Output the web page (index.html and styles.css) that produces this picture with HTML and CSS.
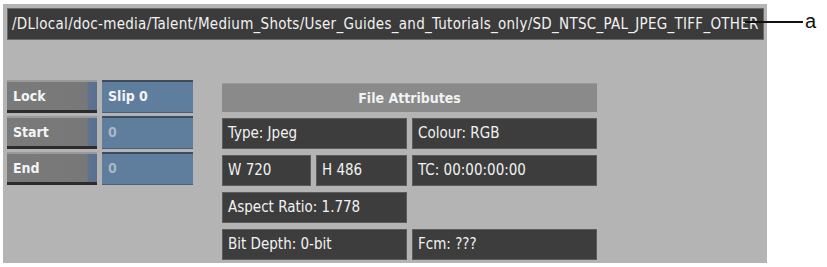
FILE: index.html
```html
<!DOCTYPE html>
<html lang="en">
<head>
  <meta charset="UTF-8">
  <title>File Attributes</title>
  <link rel="stylesheet" href="styles.css">
</head>
<body>

  <div class="panel">
    <!-- clip path -->
    <div class="path">/DLlocal/doc-media/Talent/Medium_Shots/User_Guides_and_Tutorials_only/SD_NTSC_PAL_JPEG_TIFF_OTHER</div>

    <div class="main">
      <div class="controls">
        <div class="row">
          <div class="btn">Lock</div>
          <div class="field">Slip 0</div>
        </div>
        <div class="row">
          <div class="btn">Start</div>
          <div class="field dim">0</div>
        </div>
        <div class="row">
          <div class="btn">End</div>
          <div class="field dim">0</div>
        </div>
      </div>

      <div class="attrs">
        <div class="head">File Attributes</div>
        <div class="cell wide">Type: Jpeg</div>
        <div class="cell">Colour: RGB</div>
        <div class="cell">W 720</div>
        <div class="cell">H 486</div>
        <div class="cell">TC: 00:00:00:00</div>
        <div class="cell wide">Aspect Ratio: 1.778</div>
        <div class="empty"></div>
        <div class="cell wide">Bit Depth: 0-bit</div>
        <div class="cell">Fcm: ???</div>
      </div>
    </div>
  </div>

  <div class="callout">
    <span class="leader"></span>
    <span class="letter">a</span>
  </div>

</body>
</html>
```

FILE: styles.css
```css
body {
  margin: 0;
  background: #fff;
  font-family: 'DejaVu Sans Condensed', 'DejaVu Sans', sans-serif;
  color: #f2f2f2;
}

.panel {
  margin: 4px 0 0 3px;
  width: 764px;
  height: 259px;
  box-sizing: border-box;
  padding: 4px 3px 0 4px;
  background: #b4b4b4;
}

.path {
  height: 32px;
  box-sizing: border-box;
  border: 1px solid #6a6a6a;
  background: #3b3b3b;
  font-size: 15px;
  line-height: 30px;
  padding-left: 4px;
  white-space: nowrap;
  overflow: hidden;
  letter-spacing: 0.28px;
}

.main {
  display: flex;
  margin-top: 40px;
}

.controls {
  display: flex;
  flex-direction: column;
  gap: 3px;
  width: 186px;
}

.row {
  display: flex;
  gap: 5px;
  height: 33px;
}

.btn {
  width: 90px;
  box-sizing: border-box;
  background: linear-gradient(to right, #7a7a7a 0, #787878 88%, #5e7290 91%, #5a6e8e 100%);
  border-top: 2px solid #9a9a9a;
  border-bottom: 3px solid #2c2c2c;
  font-size: 14px;
  font-weight: bold;
  line-height: 28px;
  padding-left: 6px;
  color: #f4f4f4;
}

.field {
  flex: 1;
  box-sizing: border-box;
  background: #5f7e9d;
  border-top: 2px solid #3e4c5c;
  border-bottom: 1px solid #4b6078;
  font-size: 14px;
  font-weight: bold;
  line-height: 29px;
  padding-left: 6px;
  color: #f4f4f4;
}

.field.dim {
  color: #a9b8c6;
}

.attrs {
  margin: 3px 0 0 29px;
  display: grid;
  grid-template-columns: 89px 91px 185px;
  grid-template-rows: 29px 31px 31px 31px 31px;
  column-gap: 5px;
  row-gap: 6px;
}

.head {
  grid-column: 1 / 4;
  background: #8a8a8a;
  border-top: 1px solid #9a9a9a;
  text-align: center;
  font-size: 14px;
  font-weight: bold;
  line-height: 28px;
}

.cell {
  box-sizing: border-box;
  background: #3d3d3d;
  border: 1px solid #5c5c5c;
  font-size: 15px;
  line-height: 29px;
  padding-left: 5px;
  white-space: nowrap;
}

.wide {
  grid-column: span 2;
}

.callout {
  position: absolute;
  left: 745px;
  top: 11px;
  display: flex;
  align-items: flex-start;
  font-family: 'Liberation Sans', Arial, sans-serif;
}

.leader {
  width: 58px;
  height: 2px;
  margin-top: 10px;
  background: #111;
}

.letter {
  font-size: 20px;
  color: #111;
  margin-left: 2px;
  line-height: 20px;
}
```
